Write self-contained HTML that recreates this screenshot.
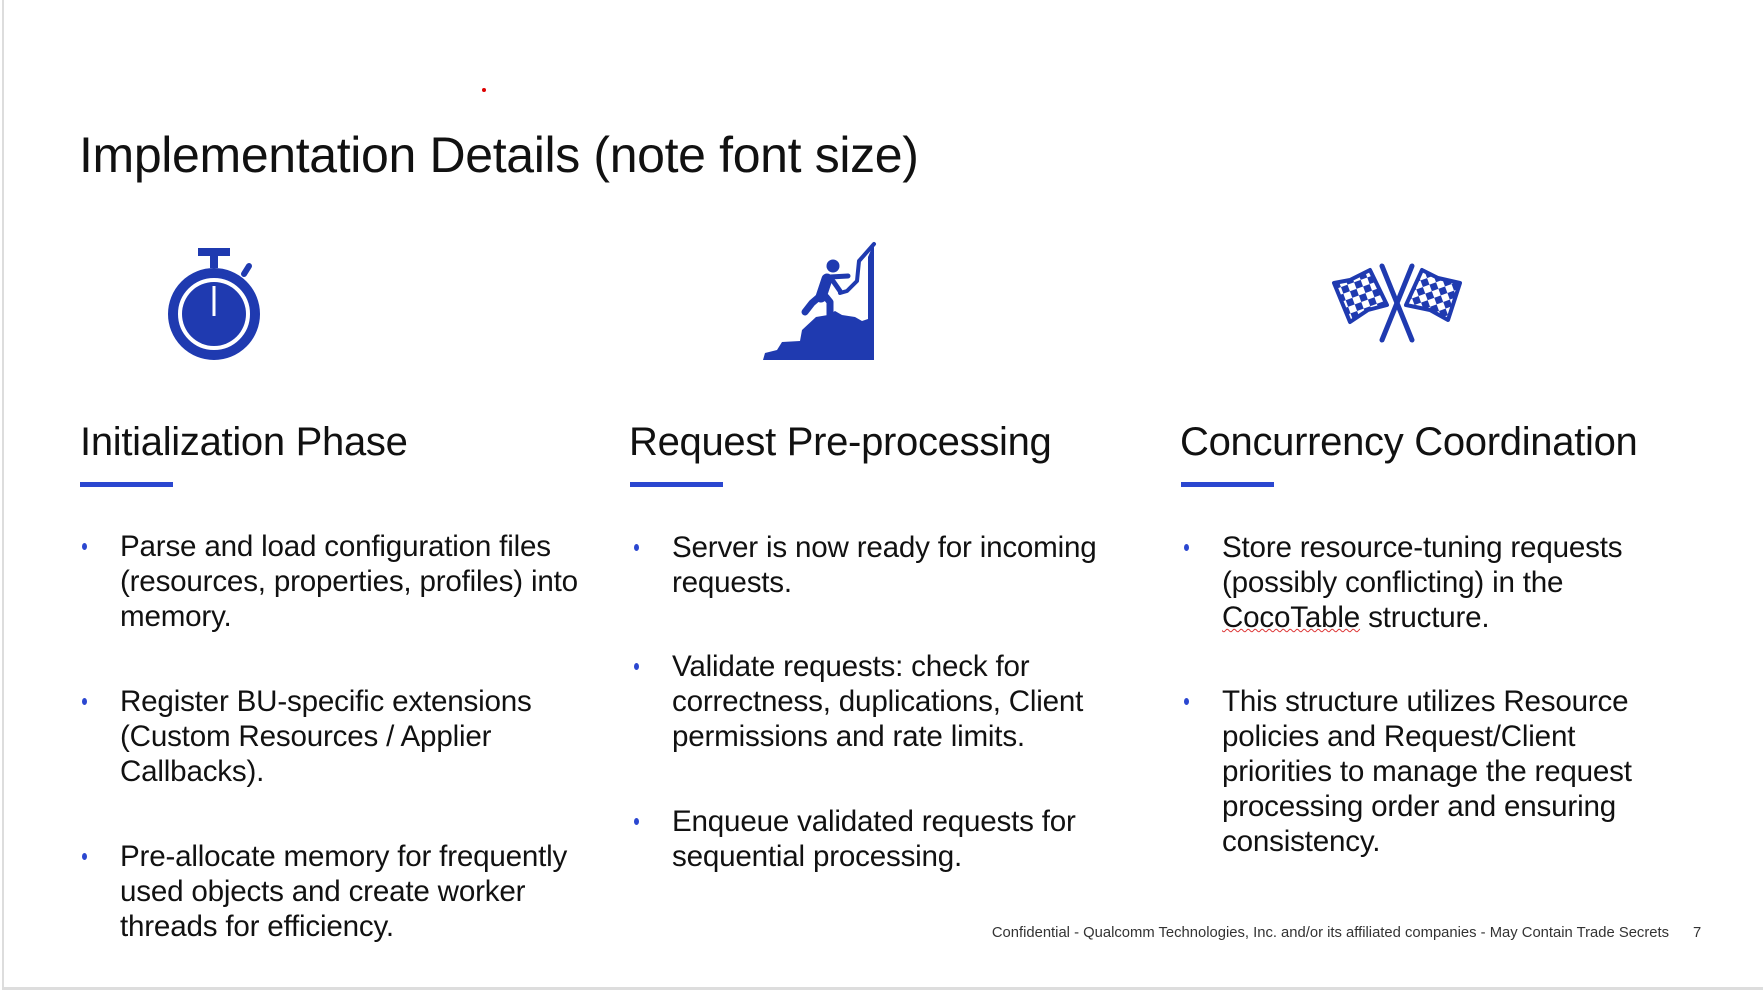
<!DOCTYPE html>
<html><head><meta charset="utf-8"><style>
html,body{margin:0;padding:0}
body{width:1763px;height:992px;position:relative;overflow:hidden;background:#fff;font-family:"Liberation Sans",Arial,sans-serif;color:#111}
.frame{position:absolute;left:2px;top:0;width:1761px;height:990px;border-left:2px solid #ddd;border-bottom:3px solid #ddd;box-sizing:border-box}
h1{position:absolute;left:79px;top:126px;margin:0;font-weight:normal;font-size:50px;letter-spacing:-0.35px;white-space:nowrap}
.h{position:absolute;top:420px;font-size:40px;white-space:nowrap;letter-spacing:-0.3px}
.u{position:absolute;top:482px;width:93px;height:5px;background:#2b47d0}
.p{position:absolute;font-size:29.6px;line-height:35px;white-space:nowrap;letter-spacing:-0.2px}
.p::before{content:"";position:absolute;left:-38px;top:14px;width:5px;height:7px;border-radius:50%;background:#2b47d0}
.foot{position:absolute;top:925px;font-size:14.8px;color:#333;white-space:nowrap}
</style></head><body>
<div class="frame"></div>
<div style="position:absolute;left:482px;top:88px;width:4px;height:4px;border-radius:50%;background:#d00"></div>
<h1>Implementation Details (note font size)</h1>

<svg style="position:absolute;left:160px;top:244px" width="110" height="120" viewBox="0 0 110 120">
<rect x="38" y="4" width="32" height="8" fill="#1f3ab0"/>
<rect x="50" y="10" width="8" height="14" fill="#1f3ab0"/>
<path d="M84 30 l5 -8" stroke="#1f3ab0" stroke-width="6" stroke-linecap="round"/>
<circle cx="54" cy="70" r="41" fill="none" stroke="#1f3ab0" stroke-width="10"/>
<circle cx="54" cy="70" r="32" fill="#1f3ab0"/>
<line x1="54" y1="42" x2="54" y2="72" stroke="#fff" stroke-width="3"/>
</svg>

<svg style="position:absolute;left:750px;top:235px" width="140" height="135" viewBox="0 0 140 135">
<g fill="#1f3ab0">
<polygon points="13,125 15,118 27,115 32,107 50,106 52,95 66,82 78,80 85,76 92,80 105,82 112,86 118,84 118,22 124,8 124,125"/>
<circle cx="83" cy="31" r="6.5"/>
</g>
<g fill="none" stroke="#1f3ab0" stroke-linecap="round" stroke-linejoin="round">
<path d="M124 9 L109 26 L107 46 L97 56 L90 58" stroke-width="4"/>
<path d="M77 44 L71 62" stroke-width="11"/>
<path d="M80 42 L98 41" stroke-width="5"/>
<path d="M83 46 L90 56" stroke-width="5"/>
<path d="M69 62 L62 68 L55 77" stroke-width="7"/>
<path d="M76 62 L80 67 L80 80" stroke-width="7"/>
</g>
</svg>

<svg style="position:absolute;left:1320px;top:250px" width="160" height="110" viewBox="0 0 160 110">
<defs><pattern id="ck" width="14" height="14" patternUnits="userSpaceOnUse" patternTransform="rotate(-20)">
<rect width="14" height="14" fill="#1f3ab0"/><rect width="7" height="7" fill="#fff"/><rect x="7" y="7" width="7" height="7" fill="#fff"/></pattern></defs>
<polygon points="14,33 30,30 50,20 67,55 48,60 30,72" fill="url(#ck)" stroke="#1f3ab0" stroke-width="4" stroke-linejoin="round"/>
<polygon points="86,55 102,20 118,28 140,33 128,70 110,60" fill="url(#ck)" stroke="#1f3ab0" stroke-width="4" stroke-linejoin="round"/>
<line x1="62" y1="16" x2="92" y2="90" stroke="#1f3ab0" stroke-width="5" stroke-linecap="round"/>
<line x1="92" y1="16" x2="62" y2="90" stroke="#1f3ab0" stroke-width="5" stroke-linecap="round"/>
</svg>

<div class="h" style="left:80px">Initialization Phase</div>
<div class="h" style="left:629px">Request Pre-processing</div>
<div class="h" style="left:1180px">Concurrency Coordination</div>
<div class="u" style="left:80px"></div>
<div class="u" style="left:630px"></div>
<div class="u" style="left:1181px"></div>

<div class="p" style="left:120px;top:529px">Parse and load configuration files<br>(resources, properties, profiles) into<br>memory.</div>
<div class="p" style="left:120px;top:684px">Register BU-specific extensions<br>(Custom Resources / Applier<br>Callbacks).</div>
<div class="p" style="left:120px;top:839px">Pre-allocate memory for frequently<br>used objects and create worker<br>threads for efficiency.</div>

<div class="p" style="left:672px;top:530px">Server is now ready for incoming<br>requests.</div>
<div class="p" style="left:672px;top:649px">Validate requests: check for<br>correctness, duplications, Client<br>permissions and rate limits.</div>
<div class="p" style="left:672px;top:804px">Enqueue validated requests for<br>sequential processing.</div>

<div class="p" style="left:1222px;top:530px">Store resource-tuning requests<br>(possibly conflicting) in the<br><span style="text-decoration:underline wavy #d33;text-decoration-thickness:1px">CocoTable</span> structure.</div>
<div class="p" style="left:1222px;top:684px">This structure utilizes Resource<br>policies and Request/Client<br>priorities to manage the request<br>processing order and ensuring<br>consistency.</div>

<div class="foot" style="right:94px">Confidential - Qualcomm Technologies, Inc. and/or its affiliated companies - May Contain Trade Secrets</div>
<div class="foot" style="left:1693px">7</div>
</body></html>
